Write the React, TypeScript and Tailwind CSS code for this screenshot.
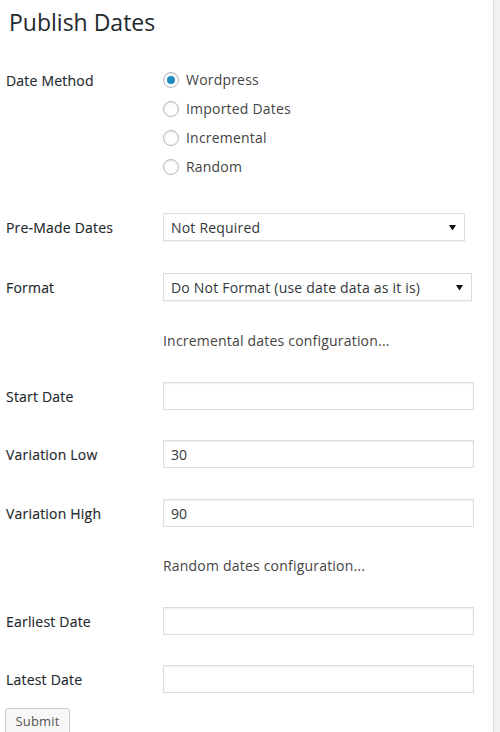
import type { ReactNode } from 'react';

const labelCls =
  'w-[157px] shrink-0 text-[14px] font-normal tracking-[0.2px] text-[#23282d] [-webkit-text-stroke:0.15px_#23282d]';

const Row = ({ label, children, className }: { label?: string; children?: ReactNode; className: string }) => (
  <div className={`flex shrink-0 items-center h-[28px] ${className}`}>
    <div className={labelCls}>{label}</div>
    {children}
  </div>
);

const TextBox = ({ value = '' }: { value?: string }) => (
  <div className="w-[311px] h-[28px] border border-[#dddddd] bg-white shadow-[inset_0_1px_2px_rgba(0,0,0,0.07)] flex items-center px-[7px] text-[14px] text-[#32373c]">
    {value}
  </div>
);

const SelectBox = ({ value, width }: { value: string; width: string }) => (
  <div className={`${width} h-[28px] border border-[#dddddd] bg-white shadow-[0_1px_1px_rgba(0,0,0,0.04)] flex items-center justify-between pl-[7px] pr-[8px] text-[14px] tracking-[0.2px] text-[#32373c]`}>
    <span>{value}</span>
    <svg width="7" height="7" viewBox="0 0 7 7">
      <path d="M0 1 L7 1 L3.5 6.5 Z" fill="#111" />
    </svg>
  </div>
);

const Radio = ({ label, checked }: { label: string; checked?: boolean }) => (
  <div className="flex items-center h-[29px]">
    <div className="w-4 h-4 rounded-full border border-[#b4b9be] bg-white shadow-[inset_0_1px_2px_rgba(0,0,0,0.1)] flex items-center justify-center">
      {checked && <div className="w-2 h-2 rounded-full bg-[#1e8cbe]" />}
    </div>
    <span className="ml-[7px] text-[14px] tracking-[0.2px] text-[#444444]">{label}</span>
  </div>
);

export default function App() {
  return (
    <div className="flex w-[500px] h-[732px] overflow-hidden bg-white font-['Open_Sans',sans-serif]">
      <div className="w-[493px] shrink-0 flex flex-col pl-[6px]">
        <h1 className="h-[44px] shrink-0 flex items-center pl-[3px] pt-[1px] text-[23px] font-normal text-[#23282d]">
          Publish Dates
        </h1>
        <div className="flex shrink-0 mt-[21px]">
          <div className={`${labelCls} h-[29px] flex items-center pt-[1px]`}>Date Method</div>
          <div className="flex flex-col">
            <Radio label="Wordpress" checked />
            <Radio label="Imported Dates" />
            <Radio label="Incremental" />
            <Radio label="Random" />
          </div>
        </div>
        <Row label="Pre-Made Dates" className="mt-[32px]">
          <SelectBox value="Not Required" width="w-[302px]" />
        </Row>
        <Row label="Format" className="mt-[32px]">
          <SelectBox value="Do Not Format (use date data as it is)" width="w-[309px]" />
        </Row>
        <Row className="mt-[25px]">
          <span className="text-[14px] tracking-[0.2px] text-[#444444]">Incremental dates configuration...</span>
        </Row>
        <Row label="Start Date" className="mt-[28px]">
          <TextBox />
        </Row>
        <Row label="Variation Low" className="mt-[30px]">
          <TextBox value="30" />
        </Row>
        <Row label="Variation High" className="mt-[31px]">
          <TextBox value="90" />
        </Row>
        <Row className="mt-[24px]">
          <span className="text-[14px] tracking-[0.2px] text-[#444444]">Random dates configuration...</span>
        </Row>
        <Row label="Earliest Date" className="mt-[28px]">
          <TextBox />
        </Row>
        <Row label="Latest Date" className="mt-[30px]">
          <TextBox />
        </Row>
        <div className="shrink-0 mt-[15px] -ml-[1px]">
          <button className="h-[28px] w-[65px] border border-[#cccccc] bg-[#f7f7f7] rounded-[3px] shadow-[0_1px_0_#cccccc] text-[13px] tracking-[0.2px] text-[#555555]">
            Submit
          </button>
        </div>
      </div>
      <div className="flex-1 border-l border-[#dddddd] bg-[#f1f1f1]" />
    </div>
  );
}
